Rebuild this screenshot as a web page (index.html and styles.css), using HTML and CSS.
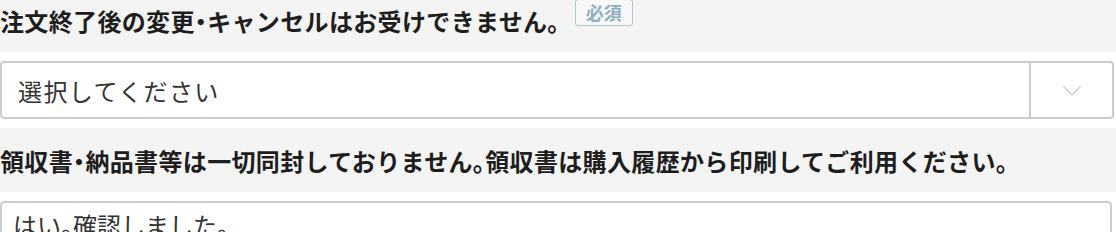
FILE: index.html
```html
<!DOCTYPE html>
<html lang="ja">
<head>
    <meta charset="UTF-8">
    <meta name="viewport" content="width=device-width, initial-scale=1.0">
    <title>注文確認</title>
    <link rel="stylesheet" href="styles.css">
</head>
<body>
    <div class="form-wrap">
        <div class="question">
            <div class="question-label">
                <span class="label-text">注文終了後の変更・キャンセルはお受けできません。</span>
                <span class="required-badge">必須</span>
            </div>
            <div class="select-box">
                <span class="select-value">選択してください</span>
                <span class="select-arrow">
                    <svg width="18" height="10" viewBox="0 0 18 10">
                        <polyline points="0.5,0.5 9,9 17.5,0.5" fill="none" stroke="#c8c8c8" stroke-width="1.2"/>
                    </svg>
                </span>
            </div>
        </div>

        <div class="question">
            <div class="question-label">
                <span class="label-text">領収書・納品書等は一切同封しておりません。領収書は購入履歴から印刷してご利用ください。</span>
            </div>
            <div class="text-box">はい。確認しました。</div>
        </div>
    </div>
</body>
</html>
```

FILE: styles.css
```css
/* page */
body {
    margin: 0;
    background-color: #fff;
    font-family: "Noto Sans CJK JP", "Noto Sans", sans-serif;
    font-feature-settings: "halt"; /* half-width punctuation */
    color: #222;
}

.form-wrap {
    margin-top: -12px; /* top of the first label is cut off in the view */
    width: 1116px;
}

.question {
    margin-bottom: 9px;
}

/* grey label bar */
.question-label {
    background-color: #f4f4f4;
    height: 64px;
    display: flex;
    align-items: center;
    margin-bottom: 9px;
}

.label-text {
    font-size: 24px;
    font-weight: bold;
    letter-spacing: 0.35px;
    color: #1e1e1e;
}

.required-badge {
    align-self: flex-start;
    margin-top: 11px;
    margin-left: 15px;
    padding: 0 10px;
    height: 25px;
    line-height: 24px;
    font-size: 18px;
    font-weight: bold;
    color: #8db1c3;
    border: 1.5px solid #a9c7d5;
    border-radius: 3px;
    background-color: #f8f8f8;
}

/* select */
.select-box {
    width: 1110px;
    height: 54px;
    border: 2px solid #cccccc;
    border-radius: 4px;
    display: flex;
    align-items: center;
    background-color: #fff;
}

.select-value {
    flex: 1;
    padding-left: 16px;
    font-size: 24px;
    letter-spacing: 1.4px;
    color: #333;
}

.select-arrow {
    width: 81px;
    height: 100%;
    border-left: 2px solid #cccccc;
    display: flex;
    align-items: center;
    justify-content: center;
}

.select-arrow svg {
    display: block;
    margin-top: 2px;
}

/* textarea */
.text-box {
    width: 1097px;
    height: 80px;
    border: 2px solid #cccccc;
    border-radius: 4px;
    padding: 5px 0 0 11px;
    font-size: 24px;
    line-height: 1.4;
    color: #333;
    background-color: #fff;
}
```
